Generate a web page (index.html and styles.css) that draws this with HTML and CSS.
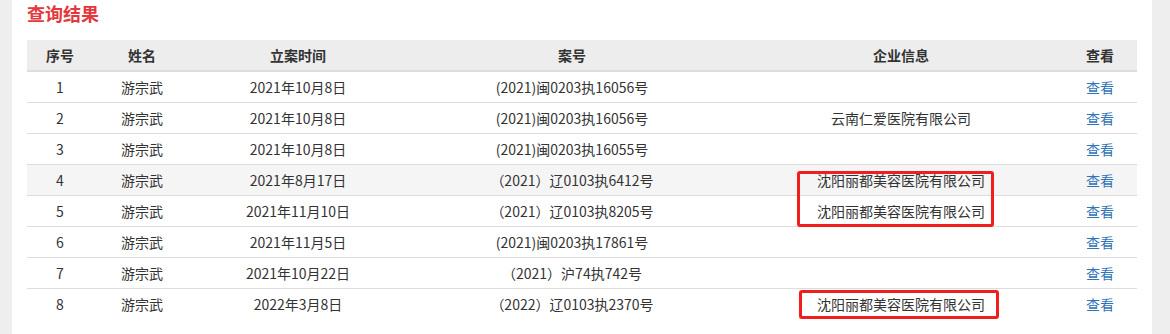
FILE: index.html
```html
<!DOCTYPE html>
<html lang="zh-CN">
<head>
<meta charset="utf-8">
<title>查询结果</title>
<link rel="stylesheet" href="styles.css">
</head>
<body>
<div class="panel">
  <h2 class="title">查询结果</h2>
  <div class="table-wrap">
    <table class="result">
      <colgroup>
        <col class="c1"><col class="c2"><col class="c3"><col class="c4"><col class="c5"><col class="c6">
      </colgroup>
      <thead>
        <tr><th>序号</th><th>姓名</th><th>立案时间</th><th>案号</th><th>企业信息</th><th>查看</th></tr>
      </thead>
      <tbody>
        <tr><td>1</td><td>游宗武</td><td>2021年10月8日</td><td>(2021)闽0203执16056号</td><td></td><td><a href="#">查看</a></td></tr>
        <tr><td>2</td><td>游宗武</td><td>2021年10月8日</td><td>(2021)闽0203执16056号</td><td>云南仁爱医院有限公司</td><td><a href="#">查看</a></td></tr>
        <tr><td>3</td><td>游宗武</td><td>2021年10月8日</td><td>(2021)闽0203执16055号</td><td></td><td><a href="#">查看</a></td></tr>
        <tr class="hover"><td>4</td><td>游宗武</td><td>2021年8月17日</td><td>（2021）辽0103执6412号</td><td>沈阳丽都美容医院有限公司</td><td><a href="#">查看</a></td></tr>
        <tr><td>5</td><td>游宗武</td><td>2021年11月10日</td><td>（2021）辽0103执8205号</td><td>沈阳丽都美容医院有限公司</td><td><a href="#">查看</a></td></tr>
        <tr><td>6</td><td>游宗武</td><td>2021年11月5日</td><td>(2021)闽0203执17861号</td><td></td><td><a href="#">查看</a></td></tr>
        <tr><td>7</td><td>游宗武</td><td>2021年10月22日</td><td>（2021）沪74执742号</td><td></td><td><a href="#">查看</a></td></tr>
        <tr><td>8</td><td>游宗武</td><td>2022年3月8日</td><td>（2022）辽0103执2370号</td><td>沈阳丽都美容医院有限公司</td><td><a href="#">查看</a></td></tr>
      </tbody>
    </table>
    <div class="mark mark-a"></div>
    <div class="mark mark-b"></div>
  </div>
</div>
</body>
</html>
```

FILE: styles.css
```css
html, body {
  margin: 0;
  padding: 0;
}
body {
  background: #eeeeee;
  font-family: "Noto Sans CJK SC", "Noto Sans", sans-serif;
  font-size: 14px;
  color: #333;
}
.panel {
  margin-left: 12px;
  width: 1140px;
  height: 334px;
  box-sizing: border-box;
  background: #fff;
  padding: 0 15px;
}
.title {
  margin: 0;
  padding-top: 0;
  height: 40px;
  line-height: 26px;
  font-size: 18px;
  font-weight: bold;
  color: #e4393c;
}
.table-wrap {
  position: relative;
}
.result {
  width: 1110px;
  border-collapse: collapse;
  table-layout: fixed;
}
.c1 { width: 66px; }
.c2 { width: 98px; }
.c3 { width: 214px; }
.c4 { width: 334px; }
.c5 { width: 324px; }
.c6 { width: 74px; }
.result th {
  height: 30px;
  padding: 0;
  background: #ededed;
  font-weight: bold;
  text-align: center;
  border-bottom: 2px solid #dddddd;
  line-height: 30px;
}
.result td {
  height: 30px;
  padding: 0;
  text-align: center;
  line-height: 30px;
  border-bottom: 1px solid #dddddd;
  white-space: nowrap;
}
.result tbody tr:last-child td {
  border-bottom: none;
}
.result tr.hover td {
  background: #f5f5f5;
}
.result a {
  color: #2f73b8;
  text-decoration: none;
}
.mark {
  position: absolute;
  border: 3px solid #f21d1d;
  border-radius: 3px;
  box-sizing: border-box;
}
.mark-a {
  left: 770px;
  top: 131px;
  width: 197px;
  height: 56px;
}
.mark-b {
  left: 772px;
  top: 250px;
  width: 200px;
  height: 29px;
}
```
